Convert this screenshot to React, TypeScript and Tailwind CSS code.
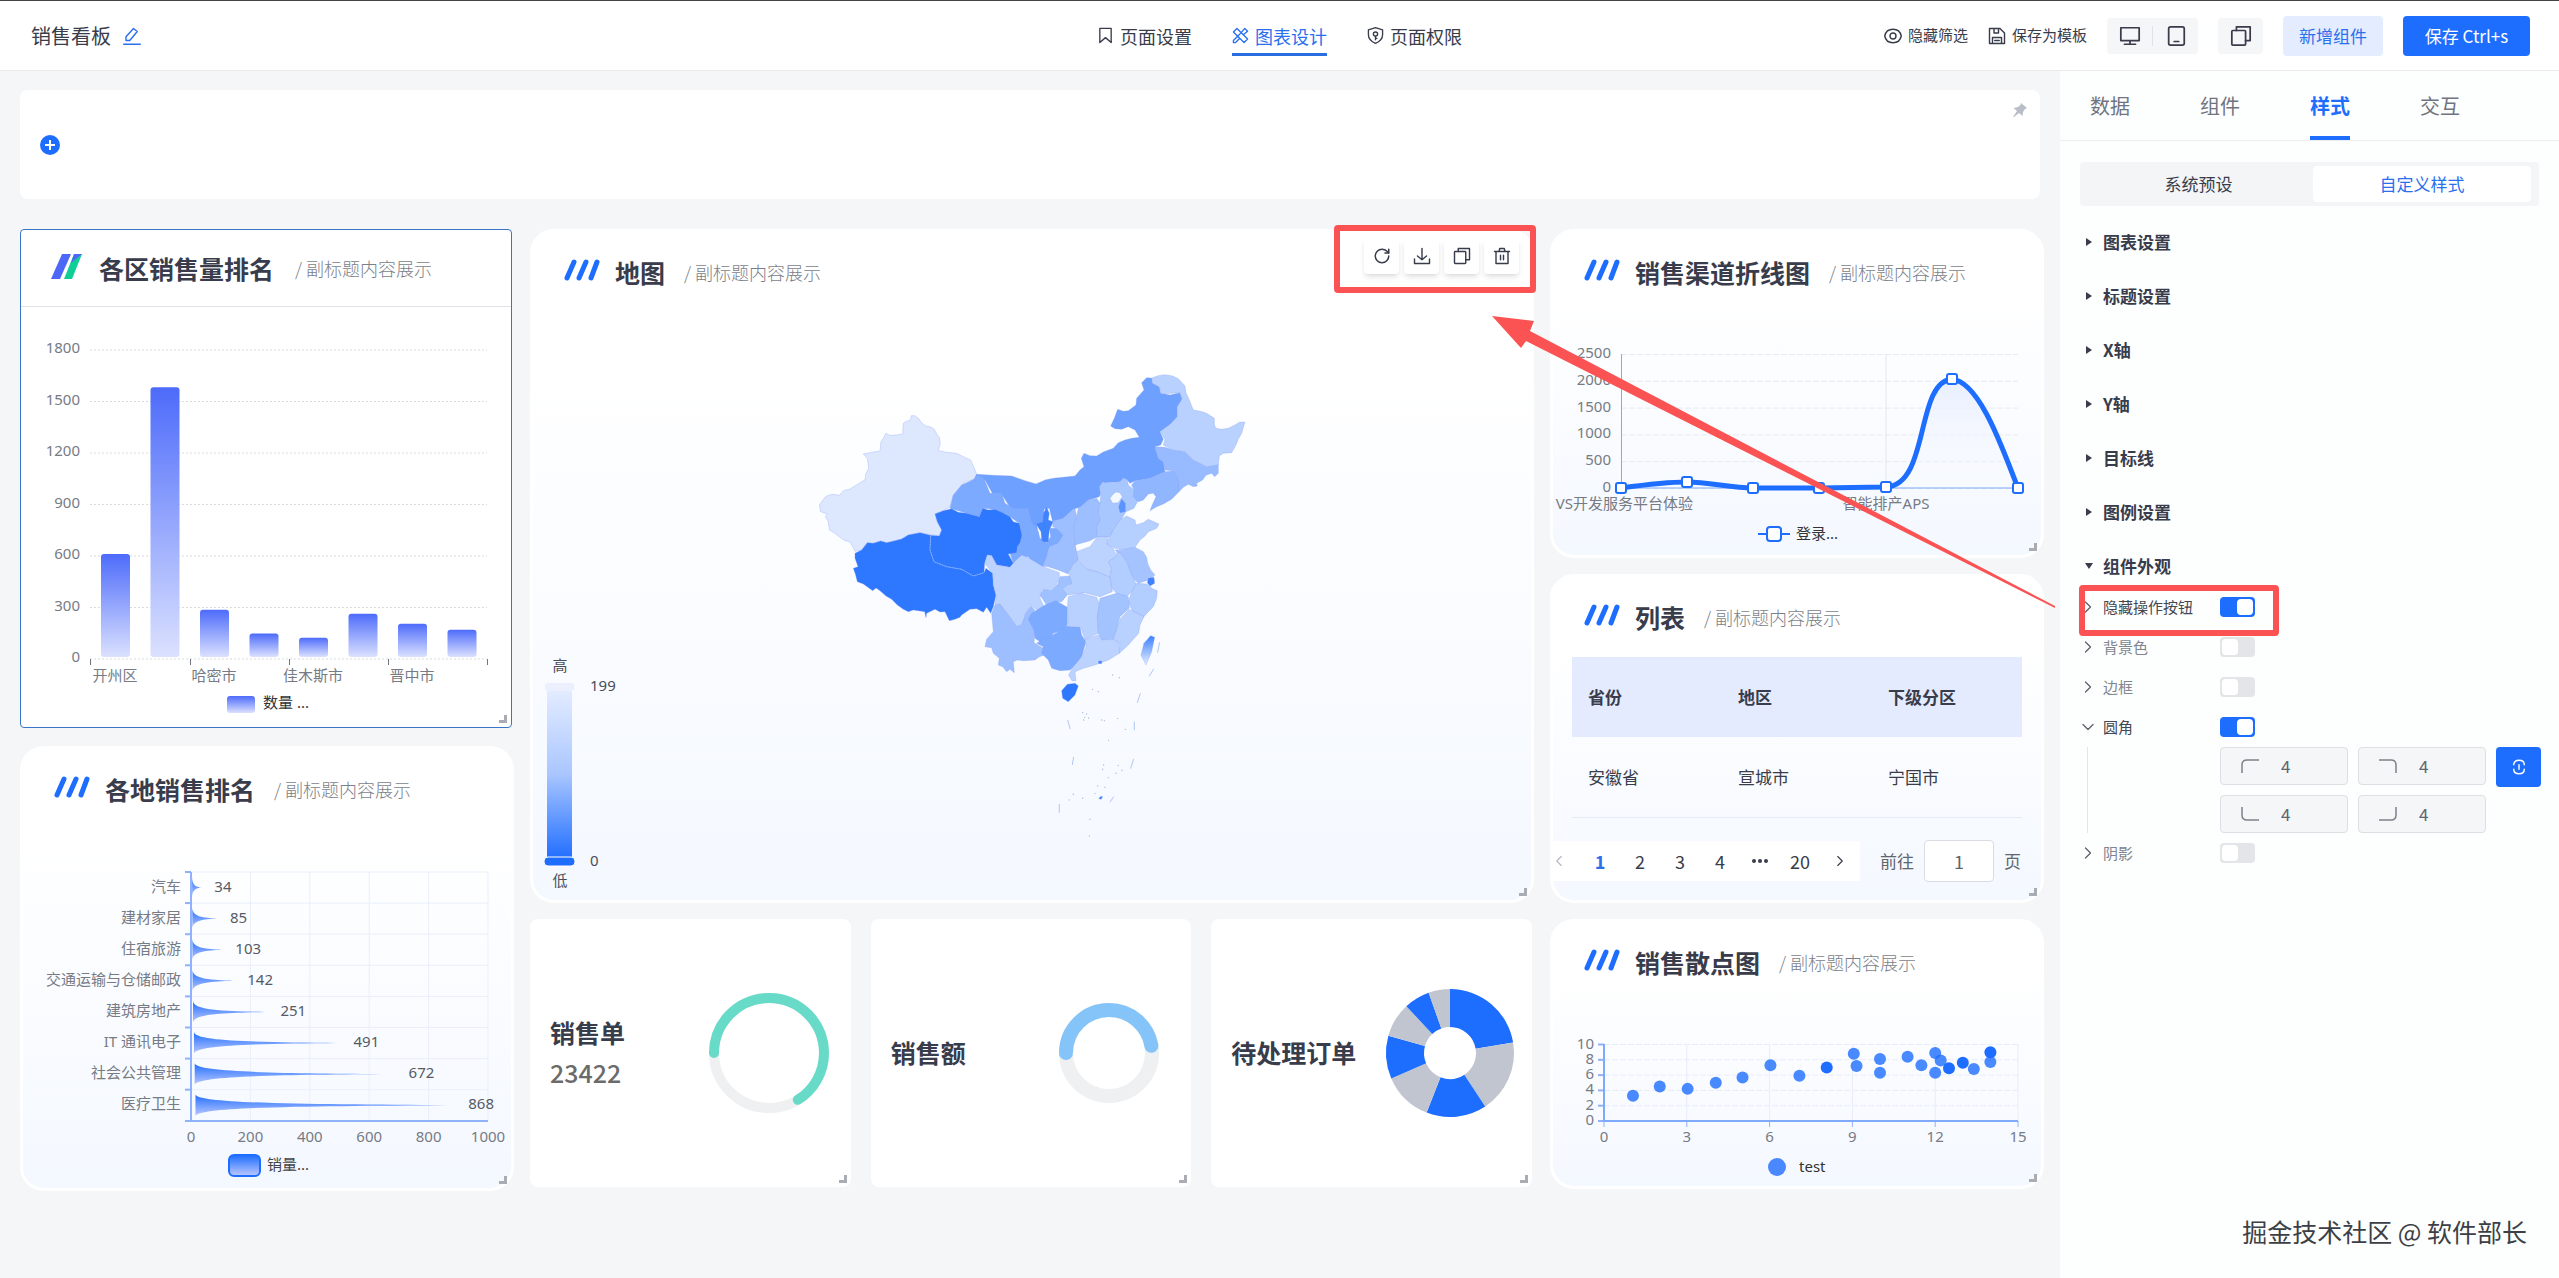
import type { ReactNode } from "react";
import { RotateCw, ChevronRight, ChevronLeft, ChevronDown } from "lucide-react";

// ─── Data ────────────────────────────────────────────────────────────────────

const BAR_TICKS = [1800, 1500, 1200, 900, 600, 300, 0];
const BAR_VALUES = [612, 1583, 287, 148, 124, 264, 206, 171];
const BAR_LABELS = ["开州区", "哈密市", "佳木斯市", "晋中市"];

const RANK_ROWS: [string, number][] = [
    ["汽车", 34],
    ["建材家居", 85],
    ["住宿旅游", 103],
    ["交通运输与仓储邮政", 142],
    ["建筑房地产", 251],
    ["IT 通讯电子", 491],
    ["社会公共管理", 672],
    ["医疗卫生", 868],
];

const LINE_POINTS: [number, number][] = [[68, 172], [134, 166], [200, 172], [266, 172], [333, 171], [399, 63], [465, 172]];

const SCATTER: [number, number, boolean][] = [
    [1.05, 3.3, false], [2.02, 4.5, false], [3.03, 4.2, false], [4.05, 5, false], [5.02, 5.7, false],
    [6.03, 7.3, false], [7.08, 5.9, false], [8.07, 7, true], [9.05, 8.8, false], [9.15, 7.2, false],
    [10, 8.1, false], [10, 6.3, false], [11, 8.4, false], [11.5, 7.3, false], [12, 8.9, false],
    [12.2, 7.9, false], [12, 6.3, false], [12.5, 6.9, true], [13, 7.6, true], [13.4, 6.8, false],
    [14, 7.7, false], [14, 9, true],
];

const PIE_STOPS = [0, 80.6, 146.6, 201.4, 246.6, 285.6, 317, 340.5, 360];

const SECTIONS = ["图表设置", "标题设置", "X轴", "Y轴", "目标线", "图例设置"];

/** Province outlines: [fill, path] */
const PROVINCES: [string, string][] = [
    ["#dde8ff", "M405 197L417 207L425 218L437 228L452 231L463 238L470 252L478 262L481 280L475 302L500 307L530 310L550 320L572 330L582 352L590 373L582 388L560 394L545 405L538 420L520 435L510 470L490 482L465 492L472 515L476 525L485 540L478 558L450 553L420 548L385 555L365 567L345 572L320 578L302 573L280 580L262 578L245 600L225 604L210 575L195 572L180 562L165 550L148 540L145 515L136 500L142 492L122 485L118 465L135 442L145 436L160 433L178 436L190 422L210 417L225 408L240 398L255 390L257 372L266 355L262 325L250 312L280 306L300 303L303 275L312 262L317 250L330 256L350 255L368 252L370 220L380 213L390 212L394 197Z"],
    ["#6ea1ff", "M590 373L640 376L695 378L735 392L768 402L795 390L820 385L885 378L900 360L912 350L904 325L912 310L930 317L950 318L970 306L1000 295L1015 278L1035 270L1055 265L1078 262L1065 240L1045 230L1025 238L1005 236L992 228L1003 205L1013 178L1030 184L1045 182L1068 165L1070 145L1092 120L1085 98L1100 83L1115 84L1118 100L1138 110L1142 130L1170 135L1200 128L1207 150L1192 170L1192 200L1172 222L1140 245L1150 268L1142 285L1125 290L1135 325L1150 335L1155 365L1110 385L1065 392L1050 400L1040 388L1020 395L975 398L958 440L925 450L905 470L880 478L850 505L818 515L808 475L792 478L790 515L770 525L775 550L755 520L745 490L700 488L670 440L640 435L615 390L590 385Z"],
    ["#7caaff", "M590 373L612 385L630 430L665 428L675 460L700 475L745 475L755 515L775 545L780 565L800 578L812 560L808 535L830 535L850 555L835 580L808 590L800 620L790 650L770 650L745 620L720 620L700 640L690 610L710 608L712 590L726 555L718 520L690 500L645 478L608 475L598 500L560 490L510 475L520 435L545 405L582 388Z"],
    ["#2d78ff", "M262 578L280 580L302 573L320 578L345 572L365 567L385 555L420 548L452 556L450 600L462 635L500 650L545 658L580 678L612 668L618 655L638 670L640 705L648 735L640 770L632 790L620 772L610 787L590 776L570 778L545 795L540 802L525 808L508 812L495 785L480 786L465 778L440 790L438 803L434 785L400 780L385 785L370 778L352 765L335 748L318 738L300 722L288 714L278 722L250 702L232 695L226 672L220 655L234 650L225 625L225 610L245 600Z"],
    ["#2d78ff", "M465 492L490 482L515 476L535 487L560 490L598 500L608 475L625 480L645 478L668 488L690 500L700 515L718 520L726 555L720 578L712 590L710 608L685 612L700 640L690 652L670 648L650 645L635 617L622 615L614 640L612 668L580 678L545 658L500 650L462 635L450 600L452 556L478 558L485 540L472 515Z"],
    ["#3f83ff", "M800 472L808 490L805 510L820 515L808 540L805 575L795 577L785 572L783 545L768 522L788 515L790 490Z"],
    ["#9dbfff", "M885 475L890 500L882 530L885 580L890 605L895 630L878 645L865 672L835 660L805 650L788 648L800 620L808 590L835 580L850 555L830 535L818 530L820 512L850 505Z"],
    ["#9dbfff", "M950 445L960 460L955 490L962 510L950 530L952 560L930 572L885 585L882 530L890 500L895 475L925 450Z"],
    ["#a9c7ff", "M975 398L1020 395L1030 383L1042 390L1045 405L1062 420L1060 440L1075 450L1062 475L1038 485L1020 515L1000 540L990 560L952 560L950 530L962 510L955 490L960 460L962 440L958 410L968 395Z"],
    ["#f4f8ff", "M1000 432L1008 426L1020 428L1027 440L1015 458L998 460L990 445Z"],
    ["#5a94ff", "M1025 447L1036 460L1036 485L1020 488L1016 470Z"],
    ["#90b6ff", "M1062 420L1055 405L1065 392L1110 385L1155 365L1185 362L1198 390L1197 425L1175 448L1150 462L1130 470L1110 482L1118 462L1128 440L1120 430L1105 432L1090 450L1075 455L1060 440Z"],
    ["#98bbff", "M1125 290L1155 292L1180 300L1215 305L1240 330L1280 350L1315 342L1315 370L1304 380L1295 370L1278 376L1268 390L1250 400L1252 408L1240 410L1225 403L1210 412L1197 425L1195 390L1180 362L1155 360L1150 335L1135 325Z"],
    ["#b9d1ff", "M1115 84L1135 77L1155 74L1178 78L1195 86L1215 108L1218 128L1228 150L1240 180L1262 184L1280 190L1303 205L1303 225L1308 235L1325 238L1345 235L1365 225L1378 217L1395 216L1385 250L1375 268L1368 285L1355 308L1330 310L1318 318L1315 345L1280 350L1240 330L1215 305L1180 300L1150 285L1155 268L1140 245L1172 222L1192 200L1192 170L1207 145L1200 128L1145 132L1138 110L1118 100Z"],
    ["#b5cfff", "M1040 498L1065 510L1068 525L1090 518L1105 508L1137 522L1130 535L1105 545L1095 558L1080 570L1065 592L1035 598L1005 595L978 582L990 560L1000 540L1018 512Z"],
    ["#bcd3ff", "M952 560L985 560L980 582L1000 595L1010 620L985 635L995 655L990 682L950 665L920 658L895 630L890 605L930 590Z"],
    ["#a5c4ff", "M1005 600L1035 598L1065 592L1090 605L1100 622L1103 640L1112 660L1125 675L1105 690L1075 700L1055 680L1042 640L1030 620Z"],
    ["#b2cdff", "M1010 604L1025 612L1042 640L1058 680L1070 705L1055 725L1040 740L1010 730L995 715L990 682L995 655L985 635L1010 618Z"],
    ["#b2cdff", "M1070 700L1100 702L1118 716L1132 722L1130 745L1120 770L1105 785L1092 800L1058 785L1045 755L1055 725Z"],
    ["#3f83ff", "M1105 685L1122 682L1124 700L1110 708L1102 698Z"],
    ["#b5cfff", "M878 645L895 632L920 658L950 665L990 682L997 725L960 740L915 728L865 735L845 722L872 705L868 672Z"],
    ["#a0c1ff", "M840 680L868 678L876 700L848 718L862 735L845 755L825 755L800 765L780 735L790 718L815 722L835 700Z"],
    ["#bcd3ff", "M622 615L635 617L650 645L690 652L705 635L725 615L748 625L790 650L838 668L838 690L815 722L785 718L780 745L792 770L780 785L750 765L738 790L725 825L710 830L685 795L660 762L645 770L648 735L640 705L638 670L614 640Z"],
    ["#9dbfff", "M645 765L660 762L685 795L710 830L725 825L738 790L752 768L765 780L748 805L765 840L762 878L790 895L795 915L778 920L765 930L730 932L712 930L700 935L703 968L690 958L680 965L668 950L655 945L658 925L640 910L635 893L615 890L620 868L640 845L635 790Z"],
    ["#7caaff", "M795 765L828 752L862 772L862 825L850 840L820 850L805 870L785 878L765 865L762 840L745 808L755 790Z"],
    ["#7caaff", "M862 828L900 830L905 855L918 875L905 920L890 942L870 960L840 962L815 955L805 930L795 920L785 910L790 890L770 880L785 870L805 862L830 848Z"],
    ["#b9d1ff", "M865 740L905 730L950 742L962 770L952 800L955 850L915 868L902 832L865 830L862 775Z"],
    ["#a3c3ff", "M960 745L1010 730L1045 740L1048 775L1020 800L1010 840L1000 868L965 870L955 850L952 800Z"],
    ["#b9d1ff", "M1048 778L1092 800L1080 825L1076 850L1060 868L1045 885L1018 910L1020 880L1000 868L1010 840L1022 805Z"],
    ["#bcd3ff", "M915 868L955 855L965 870L1000 868L1018 880L1018 910L985 930L945 945L910 955L885 965L888 992L876 992L866 975L880 950L905 920L918 890Z"],
    ["#2d78ff", "M862 1003L885 1000L895 1008L885 1035L865 1055L848 1045L845 1022Z"],
    ["url(#taiwan)", "M1112 857L1124 862L1115 905L1098 945L1083 915L1092 880Z"],
    ["#3f83ff", "M956 933h9v8h-9Z"],
    ["#3f83ff", "M956 1346l6-6h6l-4 8Z"],
];

const SEA_DASHES =
    "M1139 877L1133 908M1121 957L1108 979M1081 1030L1072 1059M1063 1115V1141M1061 1227L1052 1256M863 1110L871 1138M881 1221L877 1245M838 1362V1388M1001 1340L990 1357";

const SEA_DOTS = [
    [998, 975], [1018, 983], [938, 1018], [955, 1025], [908, 1088], [920, 1092], [914, 1102], [926, 1104], [911, 1110],
    [965, 1110], [973, 1112], [1013, 1105], [1036, 1138], [986, 1171], [971, 1245], [968, 1258], [1026, 1261], [1008, 1270],
    [985, 1283], [953, 1308], [975, 1312], [945, 1331], [868, 1350], [880, 1333], [908, 1345], [930, 1408], [928, 1458], [1015, 1246],
];

// ─── Small drawings ──────────────────────────────────────────────────────────

type IconProps = { className?: string };

function StrokeIcon({ className, children }: IconProps & { children: ReactNode }) {
    return (
        <svg viewBox="0 0 24 24" className={className} fill="none" stroke="currentColor" strokeWidth="1.9" strokeLinejoin="round" strokeLinecap="round" aria-hidden="true">
            {children}
        </svg>
    );
}

const EditIcon = (p: IconProps) => (
    <StrokeIcon {...p}>
        <path d="M4 18V13L14 2L19 6L9 18ZM1 23H23" />
    </StrokeIcon>
);
const BookmarkIcon = (p: IconProps) => (
    <StrokeIcon {...p}>
        <path d="M4 2H20V22L12 15L4 22Z" />
    </StrokeIcon>
);
const DesignIcon = (p: IconProps) => (
    <StrokeIcon {...p}>
        <path d="M8 13L2 19V22H5L11 16M13 8L18 2L22 6L16 11M7 2L2 7L17 22L22 17ZM18 2L13 8M9 12L12 9" />
    </StrokeIcon>
);
const ShieldIcon = (p: IconProps) => (
    <StrokeIcon {...p}>
        <path d="M12 1L22 4V11C22 17 17 21 12 23C7 21 2 17 2 11V4Z" />
        <circle cx="12" cy="10" r="3" />
        <path d="M12 13V18M12 16H14" />
    </StrokeIcon>
);
const EyeIcon = (p: IconProps) => (
    <StrokeIcon {...p}>
        <path d="M12 3C6 3 2 7 1 12C2 17 6 21 12 21C18 21 22 17 23 12C22 7 18 3 12 3Z" />
        <circle cx="12" cy="12" r="4" />
    </StrokeIcon>
);
const SaveIcon = (p: IconProps) => (
    <StrokeIcon {...p}>
        <path d="M2 2H16L22 8V22H2ZM8 2V8H14V2M6 22V14H18V22M9 18H15" />
    </StrokeIcon>
);
const MonitorIcon = (p: IconProps) => (
    <StrokeIcon {...p}>
        <path d="M2 3H22V17H2ZM12 17V21M6 21H18" />
    </StrokeIcon>
);
const TabletIcon = (p: IconProps) => (
    <StrokeIcon {...p}>
        <rect x="4" y="2" width="17" height="20" rx="2" />
        <path d="M10 18H15" />
    </StrokeIcon>
);
const CopyIcon = (p: IconProps) => (
    <StrokeIcon {...p}>
        <rect x="2" y="6" width="15" height="16" rx="1" />
        <path d="M7 6V2H22V17H17" />
    </StrokeIcon>
);
const DownloadIcon = (p: IconProps) => (
    <StrokeIcon {...p}>
        <path d="M12 2V17M6 12L12 17L18 12M2 16V22H22V16" />
    </StrokeIcon>
);
const TrashIcon = (p: IconProps) => (
    <StrokeIcon {...p}>
        <path d="M4 6V22H20V6M2 6H22M8 6L9 2H15L16 6M10 11V17M14 11V17" />
    </StrokeIcon>
);
const PinIcon = (p: IconProps) => (
    <svg viewBox="0 0 16 16" className={p.className} fill="currentColor" aria-hidden="true">
        <path d="M9 1L15 6L13 7L11 10L10.500 14L7 11L2 15L1 15L5 9L1.500 6L6 5L8.500 3Z" />
    </svg>
);
const LinkIcon = (p: IconProps) => (
    <StrokeIcon {...p}>
        <path d="M5 9C5 5 8 3 12 3C16 3 19 5 19 9M5 15C5 19 8 21 12 21C16 21 19 19 19 15M12 9V15" />
    </StrokeIcon>
);

function Slashes() {
    return (
        <svg viewBox="0 0 36 22" className="w-9 h-[22px] mb-1" stroke="#1d6dff" strokeWidth="5" strokeLinecap="round" aria-hidden="true">
            <path d="M3 19L10 3M15 19L22 3M27 19L33 3" />
        </svg>
    );
}

function GreenSlashes() {
    return (
        <svg viewBox="0 0 31 25" className="w-[31px] h-[25px] mb-1" aria-hidden="true">
            <path d="M11 0H20L9 25H0Z" fill="#4d68f7" />
            <path d="M23 0H31L21 25H13Z" fill="#0fcf97" />
            <path d="M23 0H31L20 9Z" fill="#4d68f7" />
        </svg>
    );
}

// ─── Cards ───────────────────────────────────────────────────────────────────

function ResizeCorner() {
    return <span className="absolute bottom-1 right-1 w-2 h-2 border-r-3 border-b-3 border-[#a9adb3]" />;
}

function CardTitle({ title }: { title: string }) {
    return (
        <>
            <h2 className="text-[25px] leading-9 font-bold text-[#383c4b]">{title}</h2>
            <span className="ml-1 text-lg text-[#7b7f8a] font-light">/ 副标题内容展示</span>
        </>
    );
}

function GlassCard({ title, children }: { title: string; children: ReactNode }) {
    return (
        <section className="relative rounded-3xl border-3 border-white bg-linear-to-b from-white from-20% to-[#f4f8ff]">
            <header className="flex items-center gap-[15px] h-20 pl-[31px]">
                <Slashes />
                <CardTitle title={title} />
            </header>
            {children}
            <ResizeCorner />
        </section>
    );
}

function BarCard() {
    const y = (v: number) => 352 - (v / 1800) * 309;
    return (
        <section className="relative mr-0.5 rounded border border-[#3a76c8] bg-white">
            <header className="flex items-center gap-[17px] h-[77px] pl-[30px] border-b border-[#dfe2e8]">
                <GreenSlashes />
                <CardTitle title="各区销售量排名" />
            </header>
            <svg viewBox="0 0 490 420" className="block w-full text-[15px] font-['Noto_Sans','Noto_Sans_CJK_SC',sans-serif]" fill="#767b85">
                <defs>
                    <linearGradient id="bar" x1="0" y1="0" x2="0" y2="1">
                        <stop offset="0" stopColor="#4d6bfa" />
                        <stop offset="1" stopColor="#dbe1ff" />
                    </linearGradient>
                </defs>
                {BAR_TICKS.map(t => (
                    <g key={t}>
                        <text x="59" y={y(t) + 3} textAnchor="end">{t}</text>
                        <line x1="69" x2="466" y1={y(t)} y2={y(t)} stroke="#d9dbdf" strokeDasharray="2 2" />
                    </g>
                ))}
                {BAR_VALUES.map((v, i) => (
                    <rect key={i} x={80 + i * 49.5} y={y(v)} width="29" height={350 - y(v)} rx="3" fill="url(#bar)" />
                ))}
                {BAR_LABELS.map((l, i) => (
                    <text key={l} x={94 + i * 99} y="374" textAnchor="middle">{l}</text>
                ))}
                <path d="M69.500 352V358M169.500 352V358M268.500 352V358M367.500 352V358M466.500 352V358" stroke="#6f747e" />
                <rect x="206" y="389" width="28" height="17" rx="3" fill="url(#bar)" />
                <text x="242" y="401" fill="#333">数量 ...</text>
            </svg>
            <ResizeCorner />
        </section>
    );
}

function RankCard() {
    const x = (v: number) => 168 + v * 0.297;
    return (
        <GlassCard title="各地销售排名">
            <svg viewBox="0 -4 488 359" className="block w-full text-[15px] font-['Noto_Sans','Noto_Sans_CJK_SC',sans-serif]" fill="#767b85">
                <defs>
                    <linearGradient id="hill" x1="0" y1="0" x2="0" y2="1">
                        <stop offset="0" stopColor="#1d6dff" />
                        <stop offset="1" stopColor="#bdc9ff" />
                    </linearGradient>
                </defs>
                {[0, 200, 400, 600, 800, 1000].map(t => (
                    <g key={t}>
                        {t > 0 && <path d={`M${x(t)} 39V288`} stroke="#e9effb" />}
                        <text x={x(t)} y="309" textAnchor="middle">{t}</text>
                    </g>
                ))}
                {RANK_ROWS.map(([label, v], i) => {
                    const top = 39 + i * 31.1;
                    const mid = top + 15.5;
                    const x0 = 169 + v * 0.004;
                    return (
                        <g key={label}>
                            <path d={`M168 ${top}H465`} stroke="#e9effb" />
                            <path d={`M162 ${top}H168`} stroke="#8fb2fb" strokeWidth="2" />
                            <text x="158" y={mid + 4} textAnchor="end">{label}</text>
                            <path
                                d={`M${x0} ${mid - 11}C${x0} ${mid - 1} ${(x0 + x(v)) / 2} ${mid - 1} ${x(v)} ${mid}C${(x0 + x(v)) / 2} ${mid + 1} ${x0} ${mid + 1} ${x0} ${mid + 11}Z`}
                                fill="url(#hill)"
                            />
                            <text x={x(v * 1.025) + 13} y={mid + 4} fill="#565b66">{v}</text>
                        </g>
                    );
                })}
                <path d="M168 39V288M162 288H465" stroke="#8fb2fb" strokeWidth="2" fill="none" />
                <rect x="206" y="322" width="31" height="21" rx="5" fill="url(#hill)" stroke="#1d6dff" strokeWidth="2" />
                <text x="244" y="337" fill="#444">销量...</text>
            </svg>
        </GlassCard>
    );
}

const TOOLS = [
    { label: "刷新", Icon: RotateCw },
    { label: "下载", Icon: DownloadIcon },
    { label: "复制", Icon: CopyIcon },
    { label: "删除", Icon: TrashIcon },
];

function MapCard() {
    return (
        <div className="relative">
            <GlassCard title="地图">
                <svg viewBox="0 -4 998 588" className="block w-full text-[15px] font-['Noto_Sans','Noto_Sans_CJK_SC',sans-serif]" fill="#4a4e58">
                    <defs>
                        <linearGradient id="scale" x1="0" y1="0" x2="0" y2="1">
                            <stop offset="0" stopColor="#e3ecff" />
                            <stop offset=".5" stopColor="#a9c6ff" />
                            <stop offset="1" stopColor="#2470ff" />
                        </linearGradient>
                        <linearGradient id="taiwan" x1="0" y1="0" x2="0" y2="1">
                            <stop offset="0" stopColor="#3a80ff" />
                            <stop offset="1" stopColor="#e6eeff" />
                        </linearGradient>
                    </defs>
                    <g transform="translate(247 34) scale(.3333)" strokeLinejoin="round">
                        {PROVINCES.map(([fill, d], i) => (
                            <path key={i} d={d} fill={fill} stroke="#7e9cf0" strokeOpacity=".45" strokeWidth="2" />
                        ))}
                        <path d="M452 558L450 600L462 635L500 650L545 658L580 678L612 668" fill="none" stroke="#7fb0ff" strokeWidth="3" strokeDasharray="5 3" />
                        <path d={SEA_DASHES} fill="none" stroke="#8aaeee" strokeWidth="2" />
                        {SEA_DOTS.map(([cx, cy]) => (
                            <circle key={`${cx}-${cy}`} cx={cx} cy={cy} r="2" fill="#a4b9de" />
                        ))}
                    </g>
                    <text x="27" y="355" textAnchor="middle">高</text>
                    <rect x="12" y="367" width="29" height="8" rx="3" fill="#eceffd" />
                    <rect x="14" y="375" width="25" height="166" fill="url(#scale)" />
                    <rect x="11" y="541" width="31" height="9" rx="4" fill="#1d6dff" stroke="#fff" />
                    <text x="57" y="375">199</text>
                    <text x="57" y="550">0</text>
                    <text x="27" y="570" textAnchor="middle">低</text>
                </svg>
            </GlassCard>
            <div className="absolute -top-1 -right-0.5 flex gap-[5px] h-[68px] w-[202px] pt-[7px] pl-6 border-6 border-[#fb5353] rounded-sm">
                {TOOLS.map(({ label, Icon }) => (
                    <button key={label} aria-label={label} className="grid place-items-center w-[35px] h-9 rounded bg-white shadow-md text-[#383c4b]">
                        <Icon className="size-[18px]" />
                    </button>
                ))}
            </div>
        </div>
    );
}

function LineCard() {
    return (
        <GlassCard title="销售渠道折线图">
            <svg viewBox="0 -4 488 243" className="block w-full text-[15px] font-['Noto_Sans','Noto_Sans_CJK_SC',sans-serif]" fill="#767b85">
                <defs>
                    <linearGradient id="area" x1="0" y1="0" x2="0" y2="1">
                        <stop offset="0" stopColor="#e8eefe" />
                        <stop offset="1" stopColor="#f5f8ff" stopOpacity="0" />
                    </linearGradient>
                </defs>
                {[2500, 2000, 1500, 1000, 500, 0].map((t, i) => (
                    <g key={t}>
                        <text x="58" y={42 + i * 26.8} textAnchor="end">{t}</text>
                        <path d={`M68 ${38.5 + i * 26.8}H465`} stroke="#e7ebf3" strokeDasharray="6 2" />
                    </g>
                ))}
                <path d="M333 38V172" stroke="#e2e7f0" />
                <path d="M333 171C377 169 362 63 399 63C428 66 452 140 465 172Z" fill="url(#area)" />
                <path d="M68.500 38V172H465" fill="none" stroke="#7fa9fa" />
                <path d="M68 172C90 169 112 166 134 166C156 166 178 172 200 172H266L333 171C377 169 362 66 399 63C428 66 452 140 465 172" fill="none" stroke="#1d6dff" strokeWidth="5" />
                {LINE_POINTS.map(([cx, cy]) => (
                    <rect key={cx} x={cx - 5} y={cy - 5} width="10" height="10" rx="2" fill="#fff" stroke="#1d6dff" strokeWidth="2" />
                ))}
                <text x="140" y="193" textAnchor="end">VS开发服务平台体验</text>
                <text x="333" y="193" textAnchor="middle">智能排产APS</text>
                <path d="M205 218H237" stroke="#1d6dff" strokeWidth="2" />
                <rect x="214" y="211" width="14" height="14" rx="3" fill="#fff" stroke="#1d6dff" strokeWidth="2" />
                <text x="243" y="223" fill="#333">登录...</text>
            </svg>
        </GlassCard>
    );
}

function ListCard() {
    return (
        <GlassCard title="列表">
            <div className="flex flex-col justify-between h-[243px] pb-[18px]">
                <div className="pl-[19px] pr-[19px]">
                    <table className="w-full table-fixed text-left text-[17px] text-[#383c4b]">
                        <thead>
                            <tr className="h-20 bg-[#e4ebff]">
                                <th className="pl-4 font-bold">省份</th>
                                <th className="pl-4 font-bold">地区</th>
                                <th className="pl-4 font-bold">下级分区</th>
                            </tr>
                        </thead>
                        <tbody>
                            <tr className="h-20 border-b border-[#e6ecf6]">
                                <td className="pl-4">安徽省</td>
                                <td className="pl-4">宣城市</td>
                                <td className="pl-4">宁国市</td>
                            </tr>
                        </tbody>
                    </table>
                </div>
                <nav className="flex items-center text-lg text-[#383c4b]">
                    <div className="flex items-center h-10 bg-white">
                        <button aria-label="上一页" className="w-[27px] text-[#b4b8c0]"><ChevronLeft className="size-[18px] ml-[-3px]" strokeWidth={1.5} /></button>
                        <button className="w-10 font-bold text-[#2a6fee]">1</button>
                        <button className="w-10">2</button>
                        <button className="w-10">3</button>
                        <button className="w-10">4</button>
                        <button className="grid place-items-center w-10" aria-label="更多">
                            <svg viewBox="0 0 16 4" className="w-4 h-1" fill="currentColor" aria-hidden="true"><circle cx="2" cy="2" r="2" /><circle cx="8" cy="2" r="2" /><circle cx="14" cy="2" r="2" /></svg>
                        </button>
                        <button className="w-10">20</button>
                        <button aria-label="下一页" className="grid place-items-center w-10"><ChevronRight className="size-[18px]" strokeWidth={1.5} /></button>
                    </div>
                    <label className="flex items-center gap-2.5 ml-5 text-[17px] text-[#606670]">
                        前往
                        <input defaultValue="1" className="w-[70px] h-[42px] rounded border border-[#d9dce3] bg-white text-center text-lg" />
                        页
                    </label>
                </nav>
            </div>
        </GlassCard>
    );
}

function ScatterCard() {
    const x = (v: number) => 51 + v * 27.6;
    const y = (v: number) => 115 - v * 7.65;
    return (
        <GlassCard title="销售散点图">
            <svg viewBox="0 -4 488 184" className="block w-full text-[15px] font-['Noto_Sans','Noto_Sans_CJK_SC',sans-serif]" fill="#767b85">
                {[0, 2, 4, 6, 8, 10].map(t => (
                    <g key={t}>
                        <text x="41" y={y(t) + 4} textAnchor="end">{t}</text>
                        <path d={`M51 ${y(t)}H465`} stroke="#e6edfb" strokeDasharray="6 2" />
                        <path d={`M45 ${y(t)}H51`} stroke="#8fb2fb" strokeWidth="2" />
                    </g>
                ))}
                {[0, 3, 6, 9, 12, 15].map(t => (
                    <g key={t}>
                        <text x={x(t)} y="136" textAnchor="middle">{t}</text>
                        <path d={`M${x(t)} 38V115`} stroke="#e6edfb" />
                        <path d={`M${x(t)} 115V121`} stroke="#8fb2fb" />
                    </g>
                ))}
                <path d="M51 38V115H465" fill="none" stroke="#7fa9fa" strokeWidth="2" />
                {SCATTER.map(([px, py, strong], i) => (
                    <circle key={i} cx={x(px)} cy={y(py)} r="6" fill="#1d6dff" fillOpacity={strong ? 1 : 0.8} />
                ))}
                <circle cx="224" cy="161" r="9" fill="#4a88ff" />
                <text x="246" y="166" fill="#333">test</text>
            </svg>
        </GlassCard>
    );
}

function StatCard({ title, value, children }: { title: string; value?: string; children: ReactNode }) {
    return (
        <section className="relative flex items-center justify-between h-[268px] pl-5 pr-0.5 rounded-lg bg-white">
            <div className="pb-0.5 text-[25px] leading-10 font-bold text-[#383c4b]">
                <h2>{title}</h2>
                {value && <p className="font-medium text-[#6b6b6b]">{value}</p>}
            </div>
            {children}
            <ResizeCorner />
        </section>
    );
}

/** Ring gauge; the arc starts at nine o'clock and runs clockwise */
function Ring({ r, width, sweep, color }: { r: number; width: number; sweep: number; color: string }) {
    const len = 2 * Math.PI * r;
    return (
        <svg viewBox="-80 -80 160 160" className="w-40 h-40" fill="none" strokeWidth={width} aria-hidden="true">
            <circle r={r} stroke="#eef0f1" />
            <circle r={r} stroke={color} strokeLinecap="round" strokeDasharray={`${(len * sweep) / 360} ${len}`} transform="rotate(180)" />
        </svg>
    );
}

function Pie() {
    const pt = (deg: number, r: number) => {
        const a = (deg * Math.PI) / 180;
        return `${Math.sin(a) * r} ${-Math.cos(a) * r}`;
    };
    return (
        <svg viewBox="-80 -80 160 160" className="w-40 h-40" aria-hidden="true">
            {PIE_STOPS.slice(0, -1).map((from, i) => {
                const to = PIE_STOPS[i + 1];
                return (
                    <path
                        key={from}
                        d={`M${pt(from, 64)}A64 64 0 0 1 ${pt(to, 64)}L${pt(to, 26)}A26 26 0 0 0 ${pt(from, 26)}Z`}
                        fill={i % 2 ? "#c1c5cf" : "#1d6dff"}
                    />
                );
            })}
        </svg>
    );
}

// ─── Side panel ──────────────────────────────────────────────────────────────

function StyleRow({ label, on, open, dark }: { label: string; on: boolean; open?: boolean; dark?: boolean }) {
    const Arrow = open ? ChevronDown : ChevronRight;
    return (
        <label className={`flex items-center h-10 text-[15px] ${dark ? "text-[#444852]" : "text-[#80858f]"}`}>
            <Arrow className="size-5 -ml-0.5 mr-[5px] text-[#5b606b]" strokeWidth={1.5} />
            <span className="w-[117px]">{label}</span>
            <input
                type="checkbox"
                role="switch"
                defaultChecked={on}
                className="appearance-none flex items-center w-[35px] h-5 px-0.5 rounded bg-[#e3e5e8] checked:bg-[#1d6dff] checked:justify-end before:content-[''] before:w-4 before:h-4 before:rounded-sm before:bg-white"
            />
        </label>
    );
}

const CORNERS: [string, string][] = [
    ["左上", "M1 14V6Q1 1 6 1H18"],
    ["右上", "M0 1H12Q17 1 17 6V14"],
    ["左下", "M1 0V8Q1 13 6 13H18"],
    ["右下", "M0 13H12Q17 13 17 8V0"],
];

function StylePanel() {
    return (
        <aside className="w-[499px] shrink-0 bg-[#fdfefe]">
            <div className="flex gap-[70px] h-[70px] pl-[30px] border-b border-[#eceef0] text-xl text-[#6f7480]">
                <button>数据</button>
                <button>组件</button>
                <button className="border-y-4 border-t-transparent border-b-[#1d6dff] font-bold text-[#1d6dff]">样式</button>
                <button>交互</button>
            </div>
            <div className="grid grid-cols-[229fr_218fr] mt-[21px] mx-5 h-11 py-1 pl-1 pr-2 rounded bg-[#f3f5f6] text-[17px]">
                <button className="text-[#383c4b]">系统预设</button>
                <button className="rounded bg-white text-[#2a6fee]">自定义样式</button>
            </div>
            <div className="pt-[9px] pl-5">
                {SECTIONS.map(s => (
                    <button key={s} className="flex items-center gap-[11px] w-full h-[54px] pl-1.5 text-[17px] font-bold text-[#383c4b]">
                        <svg viewBox="0 0 6 10" className="w-1.5 h-2.5" fill="currentColor" aria-hidden="true"><path d="M0 1L6 5L0 9Z" /></svg>
                        {s}
                    </button>
                ))}
                <button className="flex items-center gap-[9px] w-full h-[54px] pl-1 text-[17px] font-bold text-[#383c4b]">
                    <svg viewBox="0 0 10 6" className="w-2.5 h-1.5" fill="currentColor" aria-hidden="true"><path d="M1 0H9L5 6Z" /></svg>
                    组件外观
                </button>
                <div className="relative -mt-1.5">
                    <StyleRow label="隐藏操作按钮" on dark />
                    <span className="absolute -top-0.5 -left-px w-[200px] h-[51px] border-6 border-[#fb5353] rounded-sm" />
                </div>
                <StyleRow label="背景色" on={false} />
                <StyleRow label="边框" on={false} />
                <StyleRow label="圆角" on open dark />
                <div className="flex ml-[7px] border-l border-[#e3e5e8] pl-[132px] gap-2.5">
                    <div className="grid grid-cols-2 gap-2.5">
                        {CORNERS.map(([name, d]) => (
                            <label key={name} className="flex items-center gap-[22px] w-32 h-[38px] pl-5 rounded border border-[#dcdfe3] bg-[#f4f6f7]">
                                <svg viewBox="0 0 18 14" className="w-[18px] h-3.5 shrink-0" fill="none" stroke="#7d828b" strokeWidth="1.5"><path d={d} /></svg>
                                <input defaultValue="4" aria-label={name} className="w-10 bg-transparent text-[17px] text-[#606670]" />
                            </label>
                        ))}
                    </div>
                    <button aria-label="联动圆角" className="grid place-items-center w-[45px] h-10 rounded bg-[#1d6dff] text-white">
                        <LinkIcon className="size-[18px]" />
                    </button>
                </div>
                <StyleRow label="阴影" on={false} />
            </div>
        </aside>
    );
}

// ─── Page ────────────────────────────────────────────────────────────────────

function TopBar() {
    return (
        <header className="grid grid-cols-[1fr_auto_1fr] items-center h-[71px] border-t border-t-[#444] border-b border-b-[#e8eaec] bg-white text-[#383c4b]">
            <div className="flex items-center gap-3 pl-[31px]">
                <h1 className="text-xl">销售看板</h1>
                <button aria-label="编辑名称" className="text-[#2a6fee]"><EditIcon className="size-[18px]" /></button>
            </div>
            <nav className="flex gap-10 text-lg">
                <a href="#settings" className="flex items-center gap-1.5 h-10"><BookmarkIcon className="size-[17px]" />页面设置</a>
                <a href="#design" className="flex items-center gap-1.5 h-10 border-y-3 border-t-transparent border-b-[#2a6fdf] text-[#2a6fee]"><DesignIcon className="size-[17px]" />图表设计</a>
                <a href="#access" className="flex items-center gap-1.5 h-10"><ShieldIcon className="size-[17px]" />页面权限</a>
            </nav>
            <div className="flex items-center justify-end gap-5 pr-[29px] text-[15px]">
                <button className="flex items-center gap-1.5"><EyeIcon className="size-[18px]" />隐藏筛选</button>
                <button className="flex items-center gap-1.5"><SaveIcon className="size-[18px]" />保存为模板</button>
                <div className="flex items-center h-9 rounded bg-[#f4f6f8]">
                    <button aria-label="桌面端" className="grid place-items-center w-[45px]"><MonitorIcon className="size-[22px]" /></button>
                    <span className="w-px h-5 bg-[#dfe2e6]" />
                    <button aria-label="移动端" className="grid place-items-center w-[45px]"><TabletIcon className="size-[22px]" /></button>
                </div>
                <button aria-label="复制页面" className="grid place-items-center w-[45px] h-9 rounded bg-[#f4f6f8]"><CopyIcon className="size-[22px]" /></button>
                <button className="w-[100px] h-10 rounded bg-[#e4ecff] text-[17px] text-[#2a6fee]">新增组件</button>
                <button className="w-[127px] h-10 rounded bg-[#1d6dff] text-[17px] text-white">保存 Ctrl+s</button>
            </div>
        </header>
    );
}

export default function App() {
    return (
        <div className="relative flex flex-col min-h-screen bg-[#f4f6f8] font-['Noto_Sans_CJK_SC',sans-serif]">
            <TopBar />
            <div className="flex flex-1">
                <main className="flex-1 pt-[19px] pl-5 pr-4">
                    <div className="flex items-center justify-between h-[109px] mr-1 px-5 rounded-lg bg-white">
                        <button aria-label="添加筛选" className="grid place-items-center size-5 rounded-full bg-[#1d6dff] text-white">
                            <svg viewBox="0 0 12 12" className="size-3" stroke="currentColor" strokeWidth="2"><path d="M1 6H11M6 1V11" /></svg>
                        </button>
                        <PinIcon className="size-4 self-start mt-3 -mr-2 text-[#b9bdc6]" />
                    </div>
                    <div className="grid grid-cols-[494fr_1004fr_494fr] gap-4 items-start mt-[30px]">
                        <div className="flex flex-col gap-[18px]">
                            <BarCard />
                            <RankCard />
                        </div>
                        <div className="flex flex-col gap-4">
                            <MapCard />
                            <div className="grid grid-cols-3 gap-5 pr-0.5">
                                <StatCard title="销售单" value="23422"><Ring r={55} width={10} sweep={238} color="#68dac8" /></StatCard>
                                <StatCard title="销售额"><Ring r={43} width={14} sweep={170} color="#84c4f8" /></StatCard>
                                <StatCard title="待处理订单"><Pie /></StatCard>
                            </div>
                        </div>
                        <div className="flex flex-col gap-4">
                            <LineCard />
                            <ListCard />
                            <ScatterCard />
                        </div>
                    </div>
                </main>
                <StylePanel />
            </div>
            <svg viewBox="0 0 2559 1278" className="absolute inset-0 w-full pointer-events-none" fill="#fb5353" aria-hidden="true">
                <path d="M1492 316L1534 321L1530 331L2055 606L2055 608L1526 341L1521 348Z" />
            </svg>
            <p className="absolute bottom-7 right-8 text-[25px] text-[#3c3f45]">掘金技术社区 @ 软件部长</p>
        </div>
    );
}
